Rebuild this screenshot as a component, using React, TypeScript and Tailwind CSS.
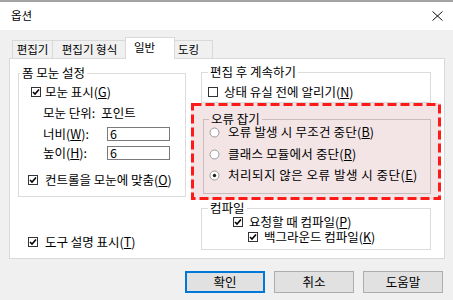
import React from "react";

const FONT = { fontFamily: '"Noto Sans CJK KR", "Noto Sans", sans-serif' };

function CheckBox({ checked = true }: { checked?: boolean }) {
  return (
    <span className="flex h-[10px] w-[10px] shrink-0 items-center justify-center border border-[#333333] bg-white">
      {checked && (
        <svg width="8" height="8" viewBox="0 0 8 8">
          <path d="M1 4 L3 6 L7 1.5" fill="none" stroke="#000" strokeWidth="1.6" />
        </svg>
      )}
    </span>
  );
}

function Radio({ checked = false }: { checked?: boolean }) {
  return (
    <svg width="11" height="11" viewBox="0 0 11 11" className="shrink-0">
      <circle cx="5.5" cy="5.5" r="4.5" fill="#ffffff" stroke="#9a9a9a" strokeWidth="1" />
      {checked && <circle cx="5.5" cy="5.5" r="1.7" fill="#222222" />}
    </svg>
  );
}

function U({ children }: { children: React.ReactNode }) {
  return <span className="underline underline-offset-[1px]">{children}</span>;
}

export default function App() {
  return (
    <div className="flex h-[300px] w-[453px] flex-col overflow-hidden bg-[#f0f0f0] text-[12.5px] text-black" style={FONT}>
      {/* Title bar */}
      <div className="flex h-[30px] shrink-0 items-center justify-between border-t-2 border-[#a3a3a3] bg-white pl-[11px] pr-[10px]">
        <span className="text-[11.5px] leading-none">옵션</span>
        <svg width="11" height="10" viewBox="0 0 11 10">
          <path d="M0.5 0.5 L10.5 9.5 M10.5 0.5 L0.5 9.5" stroke="#111" strokeWidth="1" fill="none" />
        </svg>
      </div>

      {/* Body */}
      <div className="flex flex-col px-[9px] pt-[7px]">
        {/* Tabs */}
        <div className="flex h-[21px] items-end pl-[3px] text-[11.5px]">
          <div className="flex h-[18px] w-[41px] items-center justify-center border border-b-0 border-[#d9d9d9] bg-[#f0f0f0] leading-none">편집기</div>
          <div className="flex h-[18px] w-[74px] items-center justify-center border border-b-0 border-l-0 border-[#d9d9d9] bg-[#f0f0f0] leading-none">편집기 형식</div>
          <div className="relative z-10 -mx-[2px] -mb-px flex h-[22px] w-[50px] items-center border border-b-0 border-[#d9d9d9] bg-white pb-[2px] pl-[8px] leading-none">일반</div>
          <div className="flex h-[18px] w-[40px] items-center border border-b-0 border-l-0 border-[#d9d9d9] bg-[#f0f0f0] pl-[5px] leading-none">도킹</div>
        </div>

        {/* Panel */}
        <div className="flex h-[201px] w-[436px] border border-[#d9d9d9] bg-white pl-[8px] pt-[8px]">
          {/* Left column */}
          <div className="flex w-[168px] flex-col">
            <fieldset className="border border-[#dcdcdc] pb-[9px]">
              <legend className="ml-[1px] px-[2px] leading-[12px]">폼 모눈 설정</legend>
              <div className="ml-[12px] mt-[6px] flex h-[14px] items-center gap-[4px] leading-[14px]">
                <CheckBox />
                <span className="whitespace-nowrap">모눈 표시(<U>G</U>)</span>
              </div>
              <div className="ml-[24px] mt-[7px] flex h-[14px] items-center gap-[6px] leading-[14px]">
                <span className="shrink-0 whitespace-nowrap">모눈 단위:</span>
                <span className="whitespace-nowrap">포인트</span>
              </div>
              <div className="ml-[24px] mt-[7px] flex h-[14px] items-center leading-[14px]">
                <span className="w-[64px] shrink-0 whitespace-nowrap">너비(<U>W</U>):</span>
                <div className="flex h-[14px] w-[63px] items-center border border-[#7a7a7a] bg-white pl-[2px] leading-none">6</div>
              </div>
              <div className="ml-[24px] mt-[5px] flex h-[14px] items-center leading-[14px]">
                <span className="w-[64px] shrink-0 whitespace-nowrap">높이(<U>H</U>):</span>
                <div className="flex h-[14px] w-[63px] items-center border border-[#7a7a7a] bg-white pl-[2px] leading-none">6</div>
              </div>
              <div className="ml-[9px] mt-[13px] flex h-[14px] items-center gap-[7px] leading-[14px]">
                <CheckBox />
                <span className="whitespace-nowrap">컨트롤을 모눈에 맞춤(<U>O</U>)</span>
              </div>
            </fieldset>
            <div className="ml-[10px] mt-[38px] flex h-[14px] items-center gap-[7px] leading-[14px]">
              <CheckBox />
              <span className="whitespace-nowrap">도구 설명 표시(<U>T</U>)</span>
            </div>
          </div>

          {/* Right column */}
          <div className="ml-[15px] -mt-px flex w-[230px] flex-col">
            <fieldset className="border border-[#dcdcdc] pb-[3px]">
              <legend className="ml-[6px] px-[2px] leading-[12px]">편집 후 계속하기</legend>
              <div className="ml-[6px] mt-[7px] flex h-[14px] items-center gap-[6px] leading-[14px]">
                <CheckBox checked={false} />
                <span className="whitespace-nowrap">상태 유실 전에 알리기(<U>N</U>)</span>
              </div>
            </fieldset>

            {/* Highlighted error trapping group */}
            <div className="relative -mx-[10px] flex flex-col bg-[#f3e5e5] pb-[6px] pl-[12px] pr-[10px] pt-[10px]">
              <svg className="pointer-events-none absolute inset-0" width="250" height="97" viewBox="0 0 250 97">
                <rect x="1.5" y="1.5" width="247" height="94" fill="none" stroke="#ff1a1a" strokeWidth="3" strokeDasharray="9 4" />
              </svg>
              <fieldset className="border border-[#c8bcbc] pb-[11px]">
                <legend className="ml-[5px] px-[2px] leading-[12px]">오류 잡기</legend>
                <div className="ml-[5px] flex h-[14px] items-center gap-[8px] leading-[14px]">
                  <Radio />
                  <span className="whitespace-nowrap tracking-[0.2px]">오류 발생 시 무조건 중단(<U>B</U>)</span>
                </div>
                <div className="ml-[5px] mt-[8px] flex h-[14px] items-center gap-[8px] leading-[14px]">
                  <Radio />
                  <span className="whitespace-nowrap tracking-[0.2px]">클래스 모듈에서 중단(<U>R</U>)</span>
                </div>
                <div className="ml-[5px] mt-[7px] flex h-[14px] items-center gap-[8px] leading-[14px]">
                  <Radio checked />
                  <span className="whitespace-nowrap tracking-[0.5px]">처리되지 않은 오류 발생 시 중단(<U>E</U>)</span>
                </div>
              </fieldset>
            </div>

            <fieldset className="mt-[2px] border border-[#dcdcdc] pb-[5px]">
              <legend className="ml-[6px] px-[2px] leading-[12px]">컴파일</legend>
              <div className="ml-[31px] mt-[1px] flex h-[14px] items-center gap-[6px] leading-[14px]">
                <CheckBox />
                <span className="whitespace-nowrap">요청할 때 컴파일(<U>P</U>)</span>
              </div>
              <div className="ml-[46px] mt-[1px] flex h-[14px] items-center gap-[6px] leading-[14px]">
                <CheckBox />
                <span className="whitespace-nowrap">백그라운드 컴파일(<U>K</U>)</span>
              </div>
            </fieldset>
          </div>
        </div>

        {/* Buttons */}
        <div className="mt-[12px] flex justify-end gap-[9px] pr-px">
          <button className="flex h-[22px] w-[80px] items-center justify-center border border-[#0078d7] bg-[#e1e1e1] leading-none shadow-[inset_0_0_0_1px_#0078d7]">확인</button>
          <button className="flex h-[22px] w-[80px] items-center justify-center border border-[#adadad] bg-[#e1e1e1] leading-none">취소</button>
          <button className="flex h-[22px] w-[80px] items-center justify-center border border-[#adadad] bg-[#e1e1e1] leading-none">도움말</button>
        </div>
      </div>
    </div>
  );
}
